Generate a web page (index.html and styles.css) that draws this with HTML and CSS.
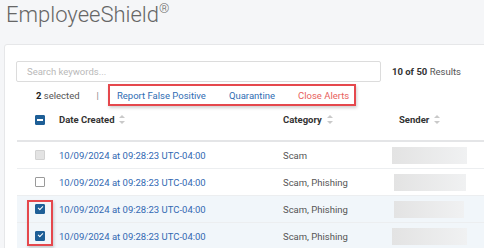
FILE: index.html
```html
<!DOCTYPE html>
<html>
<head>
  <link rel="stylesheet" href="styles.css">
</head>
<body>
  <h1 class="brand">EmployeeShield<sup>®</sup></h1>
  <div class="panel">
    <div class="search-row">
      <input class="search" type="text" placeholder="Search keywords...">
      <div class="count"><strong>10 of 50</strong> Results</div>
    </div>
    <div class="actions">
      <span class="selected"><strong>2</strong> selected</span>
      <span class="divider">|</span>
      <div class="action-box">
        <a class="action">Report False Positive</a>
        <a class="action">Quarantine</a>
        <a class="action danger">Close Alerts</a>
      </div>
    </div>
    <div class="table">
      <div class="row head">
        <span class="box partial"></span>
        <span class="th">Date Created <i class="sort"></i></span>
        <span class="th">Category <i class="sort"></i></span>
        <span class="th sender-th">Sender <i class="sort"></i></span>
      </div>
      <div class="row">
        <span class="box disabled"></span>
        <span class="date">10/09/2024 at 09:28:23 UTC-04:00</span>
        <span class="cat">Scam</span>
        <span class="blur" style="width:75px"></span>
      </div>
      <div class="row">
        <span class="box"></span>
        <span class="date">10/09/2024 at 09:28:23 UTC-04:00</span>
        <span class="cat">Scam, Phishing</span>
        <span class="blur shift" style="width:72px"></span>
      </div>
      <div class="row checked">
        <span class="box on"></span>
        <span class="date">10/09/2024 at 09:28:23 UTC-04:00</span>
        <span class="cat">Scam, Phishing</span>
        <span class="blur shift" style="width:70px"></span>
      </div>
      <div class="row checked">
        <span class="box on"></span>
        <span class="date">10/09/2024 at 09:28:23 UTC-04:00</span>
        <span class="cat">Scam, Phishing</span>
        <span class="blur" style="width:75px"></span>
      </div>
      <div class="mark"></div>
    </div>
  </div>
</body>
</html>
```

FILE: styles.css
```css
body {
  margin: 0;
  background: #f5f6f8;
  font-family: Roboto, "Liberation Sans", sans-serif;
  font-size: 9.5px;
  color: #555;
  overflow: hidden;
  height: 248px;
}
.brand {
  margin: 0;
  padding: 3px 0 0 6px;
  height: 44px;
  box-sizing: border-box;
  font-weight: 300;
  font-size: 22px;
  color: #666;
  line-height: 24px;
}
.brand sup {
  font-size: 13px;
  vertical-align: top;
  line-height: 14px;
  position: relative;
  top: -1px;
}
.panel {
  margin-left: 4px;
  width: 520px;
  background: white;
  border: 1px solid #e6e7e9;
  border-radius: 3px;
  padding: 16px 0 0 11px;
  height: 300px;
}
.search-row {
  display: flex;
  align-items: center;
  gap: 11px;
}
.search {
  width: 365px;
  height: 21px;
  box-sizing: border-box;
  border: 1px solid #dcdcdc;
  border-radius: 2px;
  padding: 0 10px;
  font-family: inherit;
  font-size: 9.5px;
  outline: none;
}
.search::placeholder {
  color: #b9b9b9;
}
.count {
  color: #555;
}
.count strong {
  color: #333;
}
.actions {
  display: flex;
  align-items: center;
  padding-left: 20px;
  margin-top: 2px;
  height: 22px;
}
.selected {
  color: #555;
}
.selected strong {
  color: #222;
}
.divider {
  margin-left: 17px;
  color: #888;
}
.action-box {
  margin-left: 9px;
  display: flex;
  align-items: center;
  gap: 23px;
  height: 22px;
  box-sizing: border-box;
  border: 2px solid #e5484d;
  padding: 0 5px 0 7px;
  box-shadow: 1px 2px 3px rgba(0, 0, 0, 0.18);
}
.action {
  color: #2f6db3;
  cursor: pointer;
}
.action.danger {
  color: #e8615c;
}
.table {
  position: relative;
  margin-left: 1px;
}
.row {
  display: grid;
  grid-template-columns: 42px 224px 109px 1fr;
  align-items: center;
  height: 26px;
  border-bottom: 1px solid #eceef0;
}
.row.head {
  height: 34px;
  border-bottom: 2px solid #e4e5e7;
}
.row.checked {
  background: #f1f6fa;
}
.th {
  font-weight: bold;
  color: #333;
  display: flex;
  align-items: center;
  gap: 5px;
  margin-top: -8px;
}
.sender-th {
  padding-left: 7px;
}
.sort {
  display: inline-block;
  width: 6px;
  height: 9px;
  position: relative;
}
.sort::before,
.sort::after {
  content: "";
  position: absolute;
  left: 0;
  border-left: 3px solid transparent;
  border-right: 3px solid transparent;
}
.sort::before {
  top: 0;
  border-bottom: 3.5px solid #c9c9c9;
}
.sort::after {
  bottom: 0;
  border-top: 3.5px solid #c9c9c9;
}
.box {
  width: 10px;
  height: 10px;
  box-sizing: border-box;
  margin-left: 18px;
  border: 1px solid #9a9a9a;
  border-radius: 1px;
  background: white;
  position: relative;
}
.head .box {
  margin-top: -7px;
}
.box.disabled {
  background: #e3e3e3;
  border-color: #d2d2d2;
}
.box.partial,
.box.on {
  background: #1e5f97;
  border-color: #1e5f97;
}
.box.partial::after {
  content: "";
  position: absolute;
  left: 1px;
  right: 1px;
  top: 3px;
  height: 2px;
  background: white;
}
.box.on::after {
  content: "";
  position: absolute;
  left: 2px;
  top: 1px;
  width: 4px;
  height: 2px;
  border-left: 1.5px solid white;
  border-bottom: 1.5px solid white;
  transform: rotate(-45deg);
}
.date {
  color: #3168b2;
}
.cat {
  color: #555;
}
.blur {
  height: 17px;
  background: linear-gradient(90deg, #e3e3e3, #f0f1f2);
}
.blur.shift {
  margin-left: 2px;
}
.mark {
  position: absolute;
  left: 10px;
  top: 94px;
  width: 26px;
  height: 46px;
  box-sizing: border-box;
  border: 2px solid #e5484d;
  box-shadow: 1px 2px 3px rgba(0, 0, 0, 0.18);
}
```
